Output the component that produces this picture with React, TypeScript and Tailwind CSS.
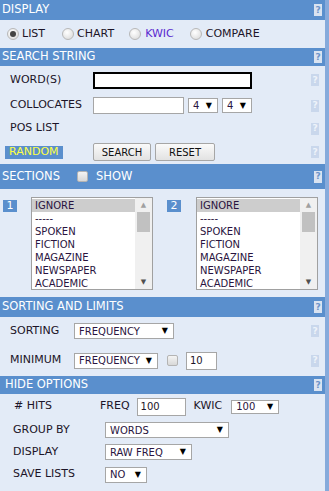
import React from "react";

const font = { fontFamily: '"DejaVu Sans", Verdana, sans-serif' };

function Help({ header = false }: { header?: boolean }) {
  return (
    <span
      className={
        "flex h-[12px] w-[8px] items-center justify-center text-[9px] font-bold leading-none " +
        (header ? "bg-[#d9e3f1] text-[#6b93c9]" : "bg-[#c9d7ec] text-[#eef3fa]")
      }
    >
      ?
    </span>
  );
}

function Header({ children, h }: { children: React.ReactNode; h: string }) {
  return (
    <div className={"flex items-center justify-between bg-[#5a8fcd] pl-[2px] pr-[3px] text-[11.5px] text-white " + h}>
      <div className="flex items-center">{children}</div>
      <Help header />
    </div>
  );
}

function Radio({ checked }: { checked?: boolean }) {
  return (
    <span className="flex h-[12px] w-[12px] items-center justify-center rounded-full border border-[#b8b8b8] bg-[radial-gradient(circle_at_40%_35%,#ffffff,#d6d6d6)]">
      {checked && <span className="h-[6px] w-[6px] rounded-full bg-[#444]" />}
    </span>
  );
}

function Select({ text, w, h = "h-[15px]" }: { text: string; w: string; h?: string }) {
  return (
    <div
      className={
        "flex items-center justify-between border border-[#a6a6a6] bg-white pl-[4px] pr-[5px] text-[10px] text-[#2a1440] " +
        w +
        " " +
        h
      }
    >
      <span>{text}</span>
      <span className="text-[8px] text-black">▼</span>
    </div>
  );
}

function Check() {
  return <span className="block h-[11px] w-[11px] rounded-[2px] border border-[#b4b4b4] bg-[linear-gradient(#f4f4f4,#d8d8d8)]" />;
}

function Button({ text, w }: { text: string; w: string }) {
  return (
    <div
      className={
        "flex h-[18px] items-center justify-center rounded-[2px] border border-[#a6a6a6] bg-[linear-gradient(#fafafa,#e2e2e2)] text-[10px] text-[#111] " +
        w
      }
    >
      {text}
    </div>
  );
}

function ListBox() {
  const items = ["-----", "SPOKEN", "FICTION", "MAGAZINE", "NEWSPAPER", "ACADEMIC"];
  return (
    <div className="flex h-[93px] w-[122px] border border-[#a0a0a0] bg-white text-[10px] text-[#2a1440]">
      <div className="flex flex-1 flex-col pt-px">
        <div className="flex h-[13px] items-center bg-[#cdcdcd] pl-[3px]">IGNORE</div>
        {items.map((t) => (
          <div key={t} className="flex h-[13px] items-center pl-[3px]">
            {t}
          </div>
        ))}
      </div>
      <div className="flex w-[17px] flex-col items-center bg-[#f0f0f0]">
        <div className="flex h-[14px] items-center text-[7px] text-[#a0a0a0]">▲</div>
        <div className="h-[20px] w-[13px] bg-[#c1c1c1]" />
        <div className="flex-1" />
        <div className="flex h-[14px] items-center text-[7px] text-[#505050]">▼</div>
      </div>
    </div>
  );
}

function Row({ h, children, pl = "pl-[10px]" }: { h: string; children: React.ReactNode; pl?: string }) {
  return (
    <div className={"flex items-center justify-between pr-[6px] " + h + " " + pl}>
      <div className="flex items-center">{children}</div>
      <Help />
    </div>
  );
}

export default function App() {
  return (
    <div style={font} className="flex w-[329px] h-[491px] bg-[#e3ebf7] text-[11px] text-[#1c1428]">
      <div className="flex w-[325px] flex-col">
        <Header h="h-[20px]">DISPLAY</Header>
        <div className="flex h-[28px] items-center pl-[7px]">
          <Radio checked />
          <span className="ml-[3px]">LIST</span>
          <span className="ml-[17px]">
            <Radio />
          </span>
          <span className="ml-[3px]">CHART</span>
          <span className="ml-[15px]">
            <Radio />
          </span>
          <span className="ml-[4px] text-[#5a2ad0]">KWIC</span>
          <span className="ml-[16px]">
            <Radio />
          </span>
          <span className="ml-[4px]">COMPARE</span>
        </div>
        <Header h="h-[18px]">SEARCH STRING</Header>
        <Row h="h-[28px]">
          <span className="w-[83px]">WORD(S)</span>
          <div className="h-[17px] w-[159px] border-2 border-black bg-white" />
        </Row>
        <Row h="h-[23px]">
          <span className="w-[83px]">COLLOCATES</span>
          <div className="h-[17px] w-[91px] border border-[#a6a6a6] bg-white" />
          <span className="ml-[4px]">
            <Select text="4" w="w-[30px]" />
          </span>
          <span className="ml-[4px]">
            <Select text="4" w="w-[30px]" />
          </span>
        </Row>
        <Row h="h-[23px]">
          <span>POS LIST</span>
        </Row>
        <Row h="h-[24px]" pl="pl-[5px]">
          <span className="flex h-[13px] w-[58px] items-center bg-[#5a8fcd] pl-[4px] text-[#ffff44]">RANDOM</span>
          <span className="ml-[30px]">
            <Button text="SEARCH" w="w-[58px]" />
          </span>
          <span className="ml-[4px]">
            <Button text="RESET" w="w-[60px]" />
          </span>
        </Row>
        <Header h="h-[25px]">
          <span>SECTIONS</span>
          <span className="ml-[17px]">
            <Check />
          </span>
          <span className="ml-[8px]">SHOW</span>
        </Header>
        <div className="flex h-[108px] items-start pl-[3px] pt-[8px]">
          <span className="mt-[3px] flex h-[12px] w-[14px] items-center justify-center bg-[#5a8fcd] text-[11px] text-white">1</span>
          <span className="ml-[14px]">
            <ListBox />
          </span>
          <span className="ml-[14px] mt-[3px] flex h-[12px] w-[14px] items-center justify-center bg-[#5a8fcd] text-[11px] text-white">2</span>
          <span className="ml-[15px]">
            <ListBox />
          </span>
        </div>
        <Header h="h-[20px]">SORTING AND LIMITS</Header>
        <Row h="h-[28px]">
          <span className="w-[64px]">SORTING</span>
          <Select text="FREQUENCY" w="w-[100px]" h="h-[16px]" />
        </Row>
        <Row h="h-[31px]">
          <span className="w-[64px]">MINIMUM</span>
          <Select text="FREQUENCY" w="w-[84px]" h="h-[16px]" />
          <span className="ml-[9px]">
            <Check />
          </span>
          <span className="ml-[8px] flex h-[18px] w-[31px] items-center border border-[#a6a6a6] bg-white pl-[3px] text-[10px]">10</span>
        </Row>
        <Header h="h-[18px]">
          <span className="pl-[3px]">HIDE OPTIONS</span>
        </Header>
        <div className="flex h-[25px] items-center pl-[14px]">
          <span className="w-[86px]"># HITS</span>
          <span>FREQ</span>
          <span className="ml-[7px] flex h-[18px] w-[49px] items-center border border-[#a6a6a6] bg-white pl-[3px] text-[10px]">100</span>
          <span className="ml-[8px]">KWIC</span>
          <span className="ml-[9px]">
            <Select text="100" w="w-[48px]" h="h-[14px]" />
          </span>
        </div>
        <div className="flex h-[22px] items-center pl-[13px]">
          <span className="w-[92px]">GROUP BY</span>
          <Select text="WORDS" w="w-[124px]" h="h-[16px]" />
        </div>
        <div className="flex h-[22px] items-center pl-[13px]">
          <span className="w-[92px]">DISPLAY</span>
          <Select text="RAW FREQ" w="w-[87px]" h="h-[16px]" />
        </div>
        <div className="flex h-[23px] items-center pl-[13px]">
          <span className="w-[92px]">SAVE LISTS</span>
          <Select text="NO" w="w-[42px]" h="h-[16px]" />
        </div>
      </div>
      <div className="w-[4px] bg-[#86aadb]" />
    </div>
  );
}
